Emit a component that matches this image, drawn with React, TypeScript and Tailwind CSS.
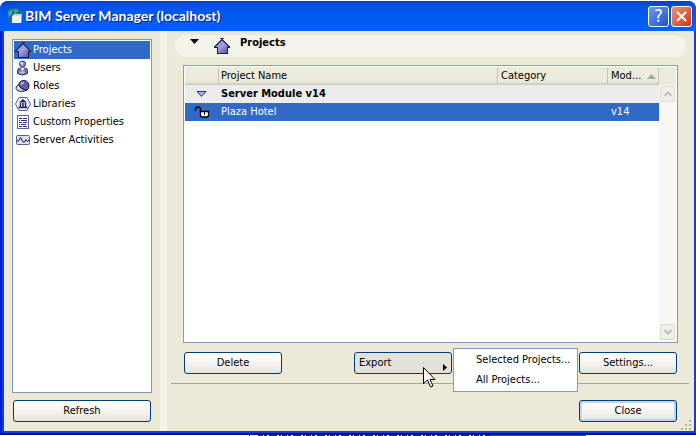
import type { ReactNode } from "react";

const SIDEBAR = [
  { label: "Projects", icon: <HouseIcon />, active: true },
  { label: "Users", icon: <UserIcon /> },
  { label: "Roles", icon: <RoleIcon /> },
  { label: "Libraries", icon: <LibraryIcon /> },
  { label: "Custom Properties", icon: <PropertiesIcon /> },
  { label: "Server Activities", icon: <ActivityIcon /> },
];

function HouseIcon() {
  return (
    <svg className="shrink-0" width="16" height="16" viewBox="0 0 16 16" shapeRendering="crispEdges">
      <defs>
        <linearGradient id="house" x1="0" y1="0" x2="1" y2="1">
          <stop offset="0.1" stopColor="#7c7cc4" />
          <stop offset="0.45" stopColor="#a3a3e2" />
          <stop offset="1" stopColor="#4c4c98" />
        </linearGradient>
      </defs>
      <path d="M8 1.500L1 8.500h2V15h10V8.500h2z" fill="url(#house)" />
      <path d="M.5 9L9.500 0M6.500 0l9 9" fill="none" stroke="#33336f" />
      <path d="M0 9.500h3v6h10v-6h3" fill="none" stroke="#1a1a50" />
    </svg>
  );
}

function UserIcon() {
  return (
    <svg className="shrink-0" width="16" height="16" viewBox="0 0 16 16">
      <path d="M2.500 13.500V10.500q0-2.500 3-2.500h4q3 0 3 2.500v3q-5 3-10 0z" fill="#6f74b8" stroke="#34366f" />
      <path d="M5.500 8l2 3.500 2-3.500z" fill="#e8eaff" />
      <circle cx="7.500" cy="4" r="3" fill="#8f94d0" stroke="#34366f" />
      <circle cx="6.700" cy="3.200" r="1.200" fill="#e6e8ff" />
      <path d="M4.500 12.500h5" stroke="#c3c6f2" strokeWidth="2" />
    </svg>
  );
}

function RoleIcon() {
  return (
    <svg className="shrink-0" width="16" height="16" viewBox="0 0 16 16">
      <path d="M3.500 8Q4 2.500 9 2.500q5 .5 5 5.500 0 3-3 5z" fill="#5c5fae" stroke="#15153f" />
      <path d="M3.500 6.500Q.5 8 1 10.500q1 3 5.500 3 3 0 5-1.500-6 0-8-5.500z" fill="#d9daf0" stroke="#15153f" />
      <path d="M6 6.500q1-2 3-2" stroke="#b4b7ee" strokeWidth="2" fill="none" />
    </svg>
  );
}

function LibraryIcon() {
  return (
    <svg className="shrink-0" width="16" height="16" viewBox="0 0 16 16">
      <path d="M4 1.500h8L15.500 8 12 14.500H4L.5 8z" fill="#eef0ff" stroke="#55588f" />
      <path d="M4 6.500L8 3l4 3.500z" fill="#24245f" />
      <path d="M5.500 7v4M8 7v4M10.500 7v4M3.500 11.500h9" stroke="#24245f" strokeWidth="1.500" />
    </svg>
  );
}

function PropertiesIcon() {
  return (
    <svg className="shrink-0" width="16" height="16" viewBox="0 0 16 16" shapeRendering="crispEdges">
      <path d="M2.500 1.500h11v13h-11z" fill="#f5f6ff" stroke="#5f62a0" />
      <path d="M4 4.500h3M8 4.500h4M4 6.500h1M6 6.500h6M4 8.500h3M8 8.500h4M4 10.500h1M6 10.500h5M4 12.500h3M8 12.500h4" stroke="#30326f" />
    </svg>
  );
}

function ActivityIcon() {
  return (
    <svg className="shrink-0" width="16" height="16" viewBox="0 0 16 16">
      <rect x="1.500" y="3.500" width="13" height="9" rx="1" fill="#dcdff0" stroke="#5a5d88" />
      <path d="M2 9h1.500L5.500 5.500 8 10h1.500L11 7.500l1.500 2L14 8" fill="none" stroke="#16163c" />
    </svg>
  );
}

function ServerIcon() {
  return (
    <svg className="shrink-0" width="16" height="16" viewBox="0 0 16 16">
      <path d="M0 4l4-4h7l4 4v8l-4 3H4L0 9z" fill="#17708a" />
      <path d="M1 4l4-3v5L2 9zM6 1l6 1-4 4z" fill="#43a3b3" />
      <path d="M5 9l3-3h6l1 1v7l-1 1z" fill="#9aa3a8" />
      <path d="M5 8h9v7H5z" fill="#f1f2f2" />
      <path d="M5 8l2-2h8l-1 2z" fill="#d3d7d9" />
    </svg>
  );
}

function LockIcon() {
  return (
    <svg width="16" height="14" viewBox="0 0 16 14">
      <path d="M1.500 6V4.500Q1.500 2 4 2t2.500 2.500V7" fill="none" stroke="#000" strokeWidth="1.300" />
      <path d="M6.500 6.500h8V10q0 2-2 2h-4q-2 0-2-2z" fill="#fff" stroke="#000" strokeWidth="1.300" />
      <path d="M10 7h1v3h-1z" />
    </svg>
  );
}

function Chevron({ up = false }: { up?: boolean }) {
  return (
    <span className="flex h-4 w-full items-center justify-center rounded-xs border border-[#dedccf] bg-[#f0efe7]">
      <svg width="8" height="6" viewBox="0 0 8 6">
        <path d={up ? "M0.500 5L4 1.500 7.500 5" : "M0.500 1L4 4.500 7.500 1"} fill="none" stroke="#c2c0b5" strokeWidth="2" />
      </svg>
    </span>
  );
}

function PushButton({ children, className = "w-[98px]" }: { children: ReactNode; className?: string }) {
  return (
    <button
      type="button"
      className={`h-[22px] shrink-0 rounded-[3px] border border-[#003c74] bg-linear-to-b from-white via-[#f5f4f0] to-[#e6e3dc] text-center ${className}`}
    >
      {children}
    </button>
  );
}

export default function App() {
  return (
    <div className="flex min-h-screen flex-col bg-white pt-px font-['DejaVu_Sans_Condensed','DejaVu_Sans',sans-serif] text-[11px] leading-[18px] text-black">
      <div className="flex grow flex-col rounded-t-lg border-b-2 border-[#00138c] bg-[#0842e6]">
        <header className="flex h-[30px] items-center gap-0.5 rounded-t-lg bg-linear-to-b from-[#0a3fc0] via-[#0055e5] via-20% to-[#0062ff] pr-1 pl-[7px]">
          <ServerIcon />
          <h1 className="grow font-[Lato,sans-serif] text-[14px] font-bold text-white [text-shadow:1px_1px_#0a1883]">
            BIM Server Manager (localhost)
          </h1>
          <button type="button" aria-label="Help" className="flex size-[21px] items-center justify-center rounded-[3px] border border-white bg-linear-to-br from-[#6d98f5] to-[#1c4fd6] text-lg text-white">
            ?
          </button>
          <button type="button" aria-label="Close window" className="flex size-[21px] items-center justify-center rounded-[3px] border border-white bg-linear-to-br from-[#f0906f] to-[#c93710]">
            <svg width="13" height="13" viewBox="0 0 13 13">
              <path d="M2 2l9 9M11 2l-9 9" stroke="#fff" strokeWidth="2" />
            </svg>
          </button>
        </header>

        <div className="flex grow border-l-2 border-[#0019cf] pr-0.5 pb-0.5 pl-0.5">
          <div className="flex min-w-0 grow bg-[#ece9d8]">
            <aside className="flex w-[156px] shrink-0 flex-col gap-[7px] px-2 pt-2 pb-[9px]">
              <nav className="grow border border-[#7f9db9] bg-white p-px">
                {SIDEBAR.map((item) => (
                  <a
                    key={item.label}
                    href="#"
                    className={`flex h-[18px] items-center gap-0.5 pl-px whitespace-nowrap ${item.active ? "bg-[#316ac5] text-white" : ""}`}
                  >
                    {item.icon}
                    {item.label}
                  </a>
                ))}
              </nav>
              <PushButton className="mx-px">Refresh</PushButton>
            </aside>
            <div className="w-[7px] shrink-0 bg-[#f4f3ea]" />

            <main className="flex min-w-0 grow flex-col">
              <div className="mx-2 mt-1 flex h-[22px] rounded-full bg-[#f4f3ea] pl-[15px]">
                <svg className="mt-1" width="9" height="5" viewBox="0 0 9 5">
                  <path d="M0 0h9L4.500 5z" />
                </svg>
                <div className="mt-[3px] ml-[15px]">
                  <HouseIcon />
                </div>
                <h2 className="ml-2.5 leading-4 font-bold">Projects</h2>
              </div>

              <div className="mx-4 mt-2 flex min-h-[240px] grow border border-[#7f9db9] bg-white p-px">
                <table className="h-fit grow table-fixed border-collapse text-left">
                  <colgroup>
                    <col className="w-[33px]" />
                    <col />
                    <col className="w-[110px]" />
                    <col className="w-[52px]" />
                  </colgroup>
                  <thead>
                    <tr className="h-[18px] bg-linear-to-b from-[#ebeadb] from-80% to-[#cbc7b8] *:p-0 *:font-normal">
                      <th />
                      <th>
                        <span className="block border-l border-[#c7c5b2] pl-0.5 leading-4">Project Name</span>
                      </th>
                      <th>
                        <span className="block border-l border-[#c7c5b2] pl-[3px] leading-4">Category</span>
                      </th>
                      <th>
                        <span className="flex items-center justify-between border-x border-[#c7c5b2] pr-0.5 pl-[3px] leading-4">
                          Mod...
                          <svg width="9" height="5" viewBox="0 0 9 5">
                            <path d="M0 5h9L4.500 0z" fill="#aca899" />
                          </svg>
                        </span>
                      </th>
                    </tr>
                  </thead>
                  <tbody>
                    <tr className="h-[18px] bg-[#ececec] font-bold *:p-0">
                      <td>
                        <svg className="mx-auto" width="11" height="6" viewBox="0 0 11 6">
                          <path d="M1 .5h9L5.500 5.500z" fill="#a9b3ee" stroke="#33357c" />
                        </svg>
                      </td>
                      <td colSpan={3} className="pl-[3px]!">Server Module v14</td>
                    </tr>
                    <tr className="h-[18px] bg-[#316ac5] text-white *:p-0">
                      <td>
                        <div className="flex justify-center">
                          <LockIcon />
                        </div>
                      </td>
                      <td className="pl-[3px]!">Plaza Hotel</td>
                      <td />
                      <td className="pl-1!">v14</td>
                    </tr>
                  </tbody>
                </table>
                <div className="flex w-[17px] shrink-0 flex-col">
                  <div className="h-[18px] shrink-0 bg-[#ebeadb]" />
                  <div className="flex grow flex-col justify-between bg-[#f8f7f3] p-px">
                    <Chevron up />
                    <Chevron />
                  </div>
                </div>
              </div>

              <div className="mr-[5px] ml-1 flex border-b border-[#aca899] pt-[9px] pr-3 pb-[9px] pl-[13px]">
                <PushButton>Delete</PushButton>
                <div className="grow" />
                <div className="relative mr-[127px]">
                  <button
                    type="button"
                    aria-haspopup="menu"
                    className="flex h-[22px] w-[98px] items-center justify-between rounded-[3px] border border-[#003c74] bg-[#e2e1da] pr-1 pl-1"
                  >
                    Export
                    <svg className="mt-2" width="4" height="7" viewBox="0 0 4 7">
                      <path d="M0 0v7l4-3.500z" />
                    </svg>
                  </button>
                  <svg className="absolute top-[15px] left-[69px]" width="13" height="21" viewBox="0 0 13 21">
                    <path d="M.5.5v16l4-3.500 3 7 2.500-1-3-6.500h5z" fill="#fff" stroke="#000" />
                  </svg>
                  <div role="menu" className="absolute -top-1 left-full ml-px flex h-11 w-[125px] flex-col border border-[#7f9db9] bg-white py-px">
                    <button type="button" role="menuitem" className="h-5 pl-[22px] text-left whitespace-nowrap">Selected Projects...</button>
                    <button type="button" role="menuitem" className="h-5 pl-[22px] text-left whitespace-nowrap">All Projects...</button>
                  </div>
                </div>
                <PushButton>Settings...</PushButton>
              </div>

              <div className="flex justify-end pt-4 pr-0.5">
                <PushButton className="w-[98px] shadow-[inset_0_0_0_2px_#bcd4f6]">Close</PushButton>
                <svg className="mt-5 ml-1" width="11" height="11" viewBox="0 0 11 11">
                  <path d="M8 0h2v2H8zM8 4h2v2H8zM4 4h2v2H4zM8 8h2v2H8zM4 8h2v2H4zM0 8h2v2H0z" fill="#b8b4a3" />
                </svg>
              </div>
            </main>
          </div>
        </div>
      </div>
      {/* sliver of the window behind */}
      <svg className="w-full" height="1" viewBox="0 0 696 1" preserveAspectRatio="none">
        <path d="M249 .5h1" stroke="#000" />
        <path d="M258 .5h232" stroke="#0a2a9c" strokeDasharray="5 1 3 2 8 2 2 1" />
        <path d="M490 .5h96" stroke="#0a55e0" />
      </svg>
    </div>
  );
}
